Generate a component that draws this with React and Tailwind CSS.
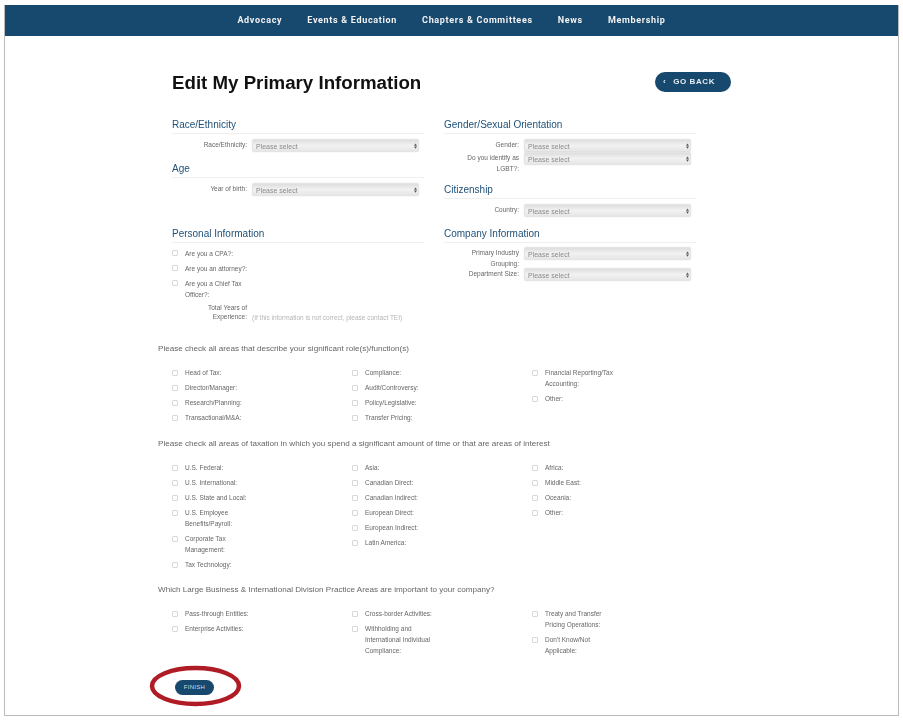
const navItems = ["Advocacy", "Events & Education", "Chapters & Committees", "News", "Membership"];

const roles = [
  ["Head of Tax:", "Director/Manager:", "Research/Planning:", "Transactional/M&A:"],
  ["Compliance:", "Audit/Controversy:", "Policy/Legislative:", "Transfer Pricing:"],
  ["Financial Reporting/Tax Accounting:", "Other:"],
];

const taxation = [
  ["U.S. Federal:", "U.S. International:", "U.S. State and Local:", "U.S. Employee Benefits/Payroll:", "Corporate Tax Management:", "Tax Technology:"],
  ["Asia:", "Canadian Direct:", "Canadian Indirect:", "European Direct:", "European Indirect:", "Latin America:"],
  ["Africa:", "Middle East:", "Oceania:", "Other:"],
];

const practice = [
  ["Pass-through Entities:", "Enterprise Activities:"],
  ["Cross-border Activities:", "Withholding and International Individual Compliance:"],
  ["Treaty and Transfer Pricing Operations:", "Don't Know/Not Applicable:"],
];

function Heading({ children }) {
  return (
    <h2 className="h-[16px] border-b border-[#efefef] pt-[0.5px] text-[10px] leading-[12px] text-[#1f5078]">
      {children}
    </h2>
  );
}

function SelectField({ label, className = "" }) {
  return (
    <div className={`flex gap-[5px] ${className}`}>
      <label className="w-[75px] shrink-0 pt-[1px] text-right text-[6.5px] leading-[10.5px] text-[#666666]">
        {label}
      </label>
      <div className="relative h-[13px] w-[167px]">
        <select className="block h-full w-full appearance-none rounded-[2px] border border-[#e4e4e4] bg-gradient-to-b from-[#dedede] via-[#f2f2f2] to-[#e6e6e6] pt-[1px] pl-[3px] text-[7px] leading-[11px] text-[#8a8a8a] shadow-[0_0_1px_#c4c4c4]">
          <option>Please select</option>
        </select>
        <svg viewBox="0 0 4 7" className="absolute top-[3.5px] right-[2.5px] h-[6px] w-[3px] fill-[#555555]">
          <path d="M2 0 4 3H0ZM2 7 0 4H4Z" />
        </svg>
      </div>
    </div>
  );
}

function CheckRow({ label }) {
  return (
    <div className="flex gap-[7px] py-[2px] text-[6.5px] leading-[11px] text-[#666666]">
      <span className="mt-[2.5px] h-[6px] w-[6px] shrink-0 rounded-[1px] border border-[#d8d8d8] bg-white" />
      <span className="w-[72px]">{label}</span>
    </div>
  );
}

function CheckSection({ title, columns, className = "" }) {
  return (
    <section className={className}>
      <p className="text-[8.1px] leading-[12px] text-[#666666]">{title}</p>
      <div className="mt-[10.5px] grid grid-cols-[180px_180px_180px] pl-[14px]">
        {columns.map((col, i) => (
          <div key={i} className="flex flex-col">
            {col.map((label) => (
              <CheckRow key={label} label={label} />
            ))}
          </div>
        ))}
      </div>
    </section>
  );
}

export default function App() {
  return (
    <div className="h-[721px] w-[903px] bg-white pt-[5px] pl-[4px] [font-family:'Liberation_Sans',Arial,sans-serif]">
      <div className="h-[711px] w-[895px] border border-t-0 border-[#bbbbbb] blur-[0.55px]">
        <nav className="flex h-[31px] items-center justify-center gap-[25px] bg-[#17486e] text-[9px] font-bold tracking-[0.68px] text-[#f2f2f2] [font-family:Roboto,sans-serif]">
          {navItems.map((item) => (
            <a key={item}>{item}</a>
          ))}
        </nav>

        <main className="pl-[153px]">
          <div className="mt-[36px] ml-[14px] flex h-[20px] w-[559px] items-center justify-between">
            <h1 className="mt-[3px] text-[18.7px] font-bold text-[#111111]">Edit My Primary Information</h1>
            <button className="flex h-[20px] w-[76px] items-center justify-center gap-[7px] rounded-full bg-[#17486e] pr-[8px] text-[8px] font-bold tracking-[0.6px] text-[#e8edf1]">
              <span>‹</span>
              <span>GO BACK</span>
            </button>
          </div>

          <div className="mt-[26px] ml-[14px] grid w-[524px] grid-cols-[252px_252px] gap-x-[20px]">
            <div>
              <Heading>Race/Ethnicity</Heading>
              <SelectField label="Race/Ethnicity:" className="mt-[5px]" />
              <div className="mt-[10px]">
                <Heading>Age</Heading>
                <SelectField label="Year of birth:" className="mt-[5px]" />
              </div>
            </div>

            <div>
              <Heading>Gender/Sexual Orientation</Heading>
              <SelectField label="Gender:" className="mt-[5px]" />
              <SelectField label={<>Do you identify as LGBT?:</>} className="h-[21px]" />
              <div className="mt-[10px]">
                <Heading>Citizenship</Heading>
                <SelectField label="Country:" className="mt-[5px]" />
              </div>
            </div>

            <div className="mt-[10px]">
              <Heading>Personal Information</Heading>
              <div className="mt-[2.5px]">
                <CheckRow label="Are you a CPA?:" />
                <CheckRow label="Are you an attorney?:" />
                <CheckRow label="Are you a Chief Tax Officer?:" />
              </div>
              <div className="mt-[1px] flex gap-[5px]">
                <span className="w-[75px] shrink-0 pl-[30px] text-right text-[6.5px] leading-[9.5px] text-[#666666]">
                  Total Years of Experience:
                </span>
                <span className="mt-[10px] text-[6.5px] leading-[10px] whitespace-nowrap text-[#b5b5b5]">
                  (If this information is not correct, please contact TEI)
                </span>
              </div>
            </div>

            <div className="mt-[10px]">
              <Heading>Company Information</Heading>
              <SelectField label="Primary Industry Grouping:" className="mt-[4px] h-[21px]" />
              <SelectField label="Department Size:" />
            </div>
          </div>

          <CheckSection
            className="mt-[20px]"
            title="Please check all areas that describe your significant role(s)/function(s)"
            columns={roles}
          />
          <CheckSection
            className="mt-[12.5px]"
            title="Please check all areas of taxation in which you spend a significant amount of time or that are areas of interest"
            columns={taxation}
          />
          <CheckSection
            className="mt-[11.5px]"
            title="Which Large Business & International Division Practice Areas are important to your company?"
            columns={practice}
          />

          <div className="relative mt-[22px] ml-[17px] w-[39px]">
            <button className="block h-[15px] w-[39px] rounded-full bg-[#17486e] text-[6px] tracking-[0.3px] text-[#d5dee6]">
              FINISH
            </button>
            <svg viewBox="0 0 91 40" className="absolute top-[-14px] left-[-25px] h-[40px] w-[91px] overflow-visible">
              <ellipse cx="45.5" cy="20" rx="43.5" ry="18" fill="none" stroke="#b01c25" strokeWidth="4.5" />
            </svg>
          </div>
        </main>
      </div>
    </div>
  );
}
